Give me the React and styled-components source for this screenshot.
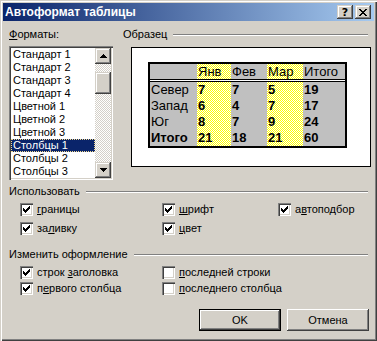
import React from 'react';
import styled, { createGlobalStyle } from 'styled-components';

const GlobalStyle = createGlobalStyle`
  html, body { margin: 0; padding: 0; background: #d4d0c8; }
  body { font-family: "Liberation Sans", Arial, sans-serif; font-size: 11px; color: #000; }
  * { box-sizing: border-box; }
`;

// 4x4 checker tile used for the classic dithered fills
const dither = (a, b) =>
  `url("data:image/svg+xml;utf8,<svg xmlns='http://www.w3.org/2000/svg' width='4' height='4' viewBox='0 0 4 4' shape-rendering='crispEdges'><rect width='4' height='4' fill='${a}'/><path d='M0 0h1v1H0zM2 0h1v1H2zM1 1h1v1H1zM3 1h1v1H3zM0 2h1v1H0zM2 2h1v1H2zM1 3h1v1H1zM3 3h1v1H3z' fill='${b}'/></svg>")`;

const formats = [
  'Стандарт 1', 'Стандарт 2', 'Стандарт 3', 'Стандарт 4', 'Цветной 1',
  'Цветной 2', 'Цветной 3', 'Столбцы 1', 'Столбцы 2', 'Столбцы 3',
];

const tones = ['gray', 'yellow', 'gray', 'yellow', 'gray'];
const header = ['', 'Янв', 'Фев', 'Мар', 'Итого'];
const rows = [
  { name: 'Север', values: [7, 7, 5, 19] },
  { name: 'Запад', values: [6, 4, 7, 17] },
  { name: 'Юг', values: [8, 7, 9, 24] },
  { name: 'Итого', values: [21, 18, 21, 60], total: true },
];

const CHECK = ['......#', '.....##', '#...###', '##.###.', '#####..', '.###...', '..#....'];
const CLOSE = ['##....##', '.##..##.', '..####..', '...##...', '..####..', '.##..##.', '##....##'];

const Pixels = ({ map }) => (
  <svg width={map[0].length} height={map.length} shapeRendering="crispEdges">
    {map.flatMap((line, y) =>
      line.split('').map((c, x) => (c === '#' ? <rect key={`${x}-${y}`} x={x} y={y} width="1" height="1" fill="#000" /> : null))
    )}
  </svg>
);

const Arrow = ({ up }) => (
  <svg width="7" height="4" shapeRendering="crispEdges">
    {[0, 1, 2, 3].map((i) => (
      <rect key={i} x={3 - i} y={up ? i : 3 - i} width={2 * i + 1} height="1" fill="#000" />
    ))}
  </svg>
);

const Check = ({ label, hot, checked }) => {
  const i = label.indexOf(hot);
  return (
    <CheckItem>
      <CheckBox>{checked && <Pixels map={CHECK} />}</CheckBox>
      <span>
        {label.slice(0, i)}
        <Hot>{hot}</Hot>
        {label.slice(i + 1)}
      </span>
    </CheckItem>
  );
};

const App = () => {
  return (
    <>
      <GlobalStyle />
      <Window>
        <TitleBar>
          <Title>Автоформат таблицы</Title>
          <CaptionButton><Question>?</Question></CaptionButton>
          <CaptionButton><Pixels map={CLOSE} /></CaptionButton>
        </TitleBar>

        <Body>
          <TopRow>
            <LeftCol>
              <FieldLabel><Hot>Ф</Hot>орматы:</FieldLabel>
              <ListBox>
                <Items>
                  {formats.map((f, i) => (
                    <Item key={f} $selected={i === 7}>{f}</Item>
                  ))}
                </Items>
                <ScrollBar>
                  <ScrollButton><Arrow up /></ScrollButton>
                  <Track>
                    <Thumb />
                  </Track>
                  <ScrollButton><Arrow /></ScrollButton>
                </ScrollBar>
              </ListBox>
            </LeftCol>

            <RightCol>
              <GroupHeader $inset={1}>
                <span>Образец</span>
                <Rule />
              </GroupHeader>
              <SampleBox>
                <Table>
                  {header.map((h, c) => (
                    <Cell key={`h${c}`} $tone={tones[c]} $height={15}>{h}</Cell>
                  ))}
                  <Divider />
                  {rows.map((r) =>
                    [r.name, ...r.values].map((v, c) => (
                      <Cell key={`${r.name}${c}`} $tone={tones[c]} $height={16} $bold={c > 0 || r.total}>
                        {v}
                      </Cell>
                    ))
                  )}
                </Table>
              </SampleBox>
            </RightCol>
          </TopRow>

          <GroupHeader $top={5}>
            <span>Использовать</span>
            <Rule />
          </GroupHeader>
          <CheckGrid $cols="142px 116px 1fr" $gap={6}>
            <Check label="границы" hot="г" checked />
            <Check label="шрифт" hot="ш" checked />
            <Check label="автоподбор" hot="в" checked />
            <Check label="заливку" hot="л" checked />
            <Check label="цвет" hot="ц" checked />
          </CheckGrid>

          <GroupHeader $top={13}>
            <span>Изменить оформление</span>
            <Rule />
          </GroupHeader>
          <CheckGrid $cols="142px 1fr" $gap={3}>
            <Check label="строк заголовка" hot="з" checked />
            <Check label="последней строки" hot="п" />
            <Check label="первого столбца" hot="е" checked />
            <Check label="последнего столбца" hot="п" />
          </CheckGrid>

          <ButtonRow>
            <PushButton $default>OK</PushButton>
            <PushButton>Отмена</PushButton>
          </ButtonRow>
        </Body>
      </Window>
    </>
  );
};

export default App;

const raised = `
  box-shadow: inset -1px -1px #404040, inset 1px 1px #d4d0c8, inset -2px -2px #808080, inset 2px 2px #ffffff;
`;

const Window = styled.div`
  width: 377px;
  height: 341px;
  background: #d4d0c8;
  padding: 3px;
  display: flex;
  flex-direction: column;
  box-shadow: inset 1px 1px #d4d0c8, inset 2px 2px #ffffff, inset -1px -1px #404040, inset -2px -2px #808080;
`;

const TitleBar = styled.div`
  height: 18px;
  display: flex;
  align-items: center;
  gap: 2px;
  padding: 0 3px 0 2px;
  background: linear-gradient(to right, #0a246a, #a6caf0);
`;

const Title = styled.div`
  flex: 1;
  color: #fff;
  font-family: "Liberation Sans", Arial, sans-serif;
  font-weight: bold;
  font-size: 12px;
  white-space: nowrap;
`;

const CaptionButton = styled.div`
  width: 16px;
  height: 14px;
  background: #d4d0c8;
  display: flex;
  align-items: center;
  justify-content: center;
  ${raised}
`;

const Question = styled.span`
  font-family: "DejaVu Sans", sans-serif;
  font-weight: bold;
  font-size: 11px;
  line-height: 11px;
`;

const Body = styled.div`
  flex: 1;
  display: flex;
  flex-direction: column;
  padding: 7px 3px 0 6px;
`;

const TopRow = styled.div`
  display: flex;
  gap: 9px;
`;

const LeftCol = styled.div`
  width: 104px;
  display: flex;
  flex-direction: column;
  gap: 5px;
`;

const RightCol = styled.div`
  flex: 1;
  display: flex;
  flex-direction: column;
  gap: 6px;
`;

const FieldLabel = styled.div`
  height: 13px;
  line-height: 13px;
`;

const Hot = styled.span`
  text-decoration: underline;
`;

const ListBox = styled.div`
  height: 134px;
  padding: 2px;
  display: flex;
  background: #fff;
  box-shadow: inset 1px 1px #808080, inset 2px 2px #404040, inset -1px -1px #ffffff, inset -2px -2px #d4d0c8;
`;

const Items = styled.div`
  flex: 1;
  display: flex;
  flex-direction: column;
`;

const Item = styled.div`
  height: 13px;
  line-height: 13px;
  padding-left: 2px;
  white-space: nowrap;
  background: ${(p) => (p.$selected ? '#0a246a' : 'transparent')};
  color: ${(p) => (p.$selected ? '#fff' : '#000')};
  outline: ${(p) => (p.$selected ? '1px dotted #f0d890' : 'none')};
  outline-offset: -1px;
`;

const ScrollBar = styled.div`
  width: 16px;
  display: flex;
  flex-direction: column;
`;

const ScrollButton = styled.div`
  height: 16px;
  background: #d4d0c8;
  display: flex;
  align-items: center;
  justify-content: center;
  ${raised}
`;

const Track = styled.div`
  flex: 1;
  background: ${dither('%23d4d0c8', '%23ffffff')} 0 0 / 4px 4px;
  image-rendering: pixelated;
`;

const Thumb = styled.div`
  margin-top: 8px;
  height: 22px;
  background: #d4d0c8;
  ${raised}
`;

const GroupHeader = styled.div`
  height: 13px;
  line-height: 13px;
  margin-top: ${(p) => p.$top || 0}px;
  padding-left: ${(p) => p.$inset || 0}px;
  padding-right: 3px;
  display: flex;
  align-items: center;
  gap: 6px;
  white-space: nowrap;
`;

const Rule = styled.div`
  flex: 1;
  height: 2px;
  border-top: 1px solid #808080;
  border-bottom: 1px solid #ffffff;
`;

const SampleBox = styled.div`
  margin-left: 9px;
  width: 240px;
  height: 120px;
  border: 1px solid #000;
  background: #fff;
  padding: 14px 0 0 16px;
`;

const Table = styled.div`
  width: 199px;
  display: grid;
  grid-template-columns: 47px 34px 36px 36px 42px;
  border: 2px solid #000;
  font-size: 13px;
`;

const Cell = styled.div`
  height: ${(p) => p.$height}px;
  line-height: ${(p) => p.$height}px;
  padding-left: 1px;
  font-weight: ${(p) => (p.$bold ? 'bold' : 'normal')};
  white-space: nowrap;
  image-rendering: pixelated;
  background: ${(p) =>
    p.$tone === 'yellow' ? `${dither('%23ffff00', '%23ffffff')} 0 0 / 4px 4px` : '#c0c0c0'};
`;

const Divider = styled.div`
  grid-column: 1 / -1;
  height: 3px;
  background: linear-gradient(#000 0 1px, #fff 1px 2px, #000 2px 3px);
`;

const CheckGrid = styled.div`
  display: grid;
  grid-template-columns: ${(p) => p.$cols};
  row-gap: ${(p) => p.$gap}px;
  margin-top: 5px;
  padding-left: 11px;
`;

const CheckItem = styled.div`
  height: 13px;
  line-height: 13px;
  display: flex;
  align-items: center;
  gap: 4px;
  white-space: nowrap;
`;

const CheckBox = styled.div`
  width: 13px;
  height: 13px;
  flex: none;
  background: #fff;
  display: flex;
  align-items: center;
  justify-content: center;
  box-shadow: inset 1px 1px #808080, inset 2px 2px #404040, inset -1px -1px #ffffff, inset -2px -2px #d4d0c8;
`;

const ButtonRow = styled.div`
  display: flex;
  justify-content: flex-end;
  gap: 6px;
  margin-top: 14px;
  padding-right: 2px;
`;

const PushButton = styled.div`
  width: 82px;
  height: 22px;
  display: flex;
  align-items: center;
  justify-content: center;
  background: #d4d0c8;
  box-shadow: ${(p) =>
    p.$default
      ? 'inset 1px 1px #000, inset -1px -1px #000, inset -2px -2px #404040, inset 2px 2px #ffffff, inset -3px -3px #808080'
      : 'inset -1px -1px #404040, inset 1px 1px #ffffff, inset -2px -2px #808080'};
`;
